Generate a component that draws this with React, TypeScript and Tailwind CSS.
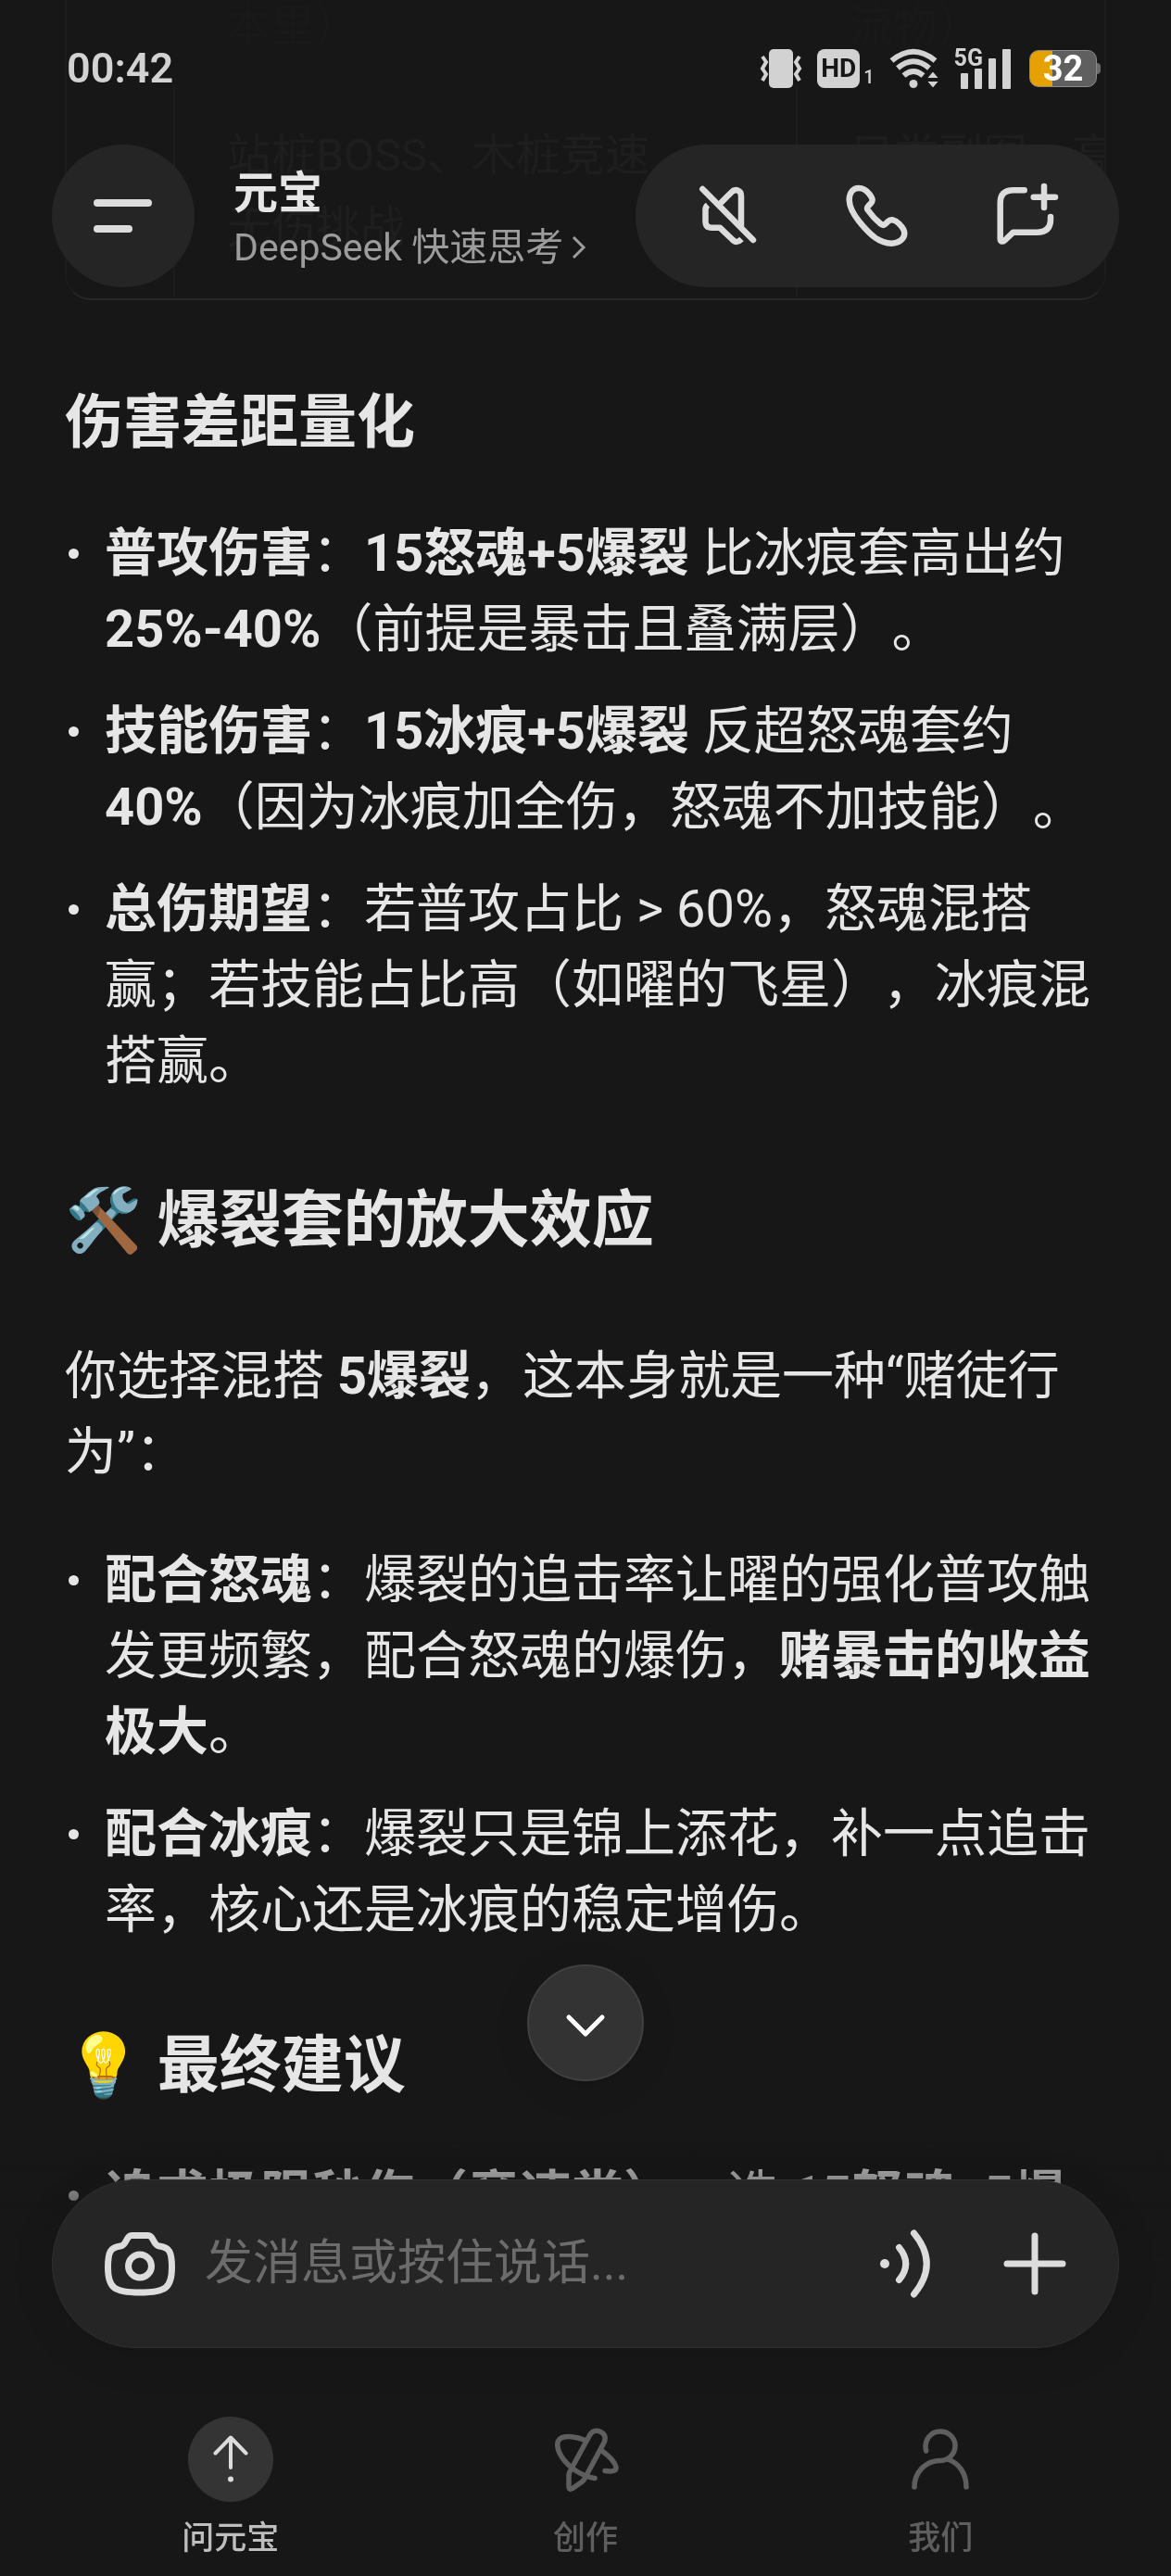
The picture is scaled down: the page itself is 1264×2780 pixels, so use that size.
import type { ReactNode } from "react";

interface IconProps {
  className?: string;
  children: ReactNode;
}

function Icon({ className = "size-20", children }: IconProps) {
  return (
    <svg
      viewBox="0 0 80 80"
      className={`${className} shrink-0`}
      fill="none"
      stroke="currentColor"
      strokeWidth="7"
      strokeLinecap="round"
      strokeLinejoin="round"
      aria-hidden="true"
    >
      {children}
    </svg>
  );
}

function StatusIcons() {
  return (
    <div className="flex items-center gap-4 text-[#d2d2d2]">
      <svg width="46" height="42" viewBox="0 0 46 42" fill="currentColor" aria-hidden="true">
        <rect x="10" width="26" height="42" rx="5" />
        <g fill="none" stroke="currentColor" strokeWidth="4">
          <path d="M3 8 7 14 3 21 7 27 3 34" />
          <path d="M43 8 39 14 43 21 39 27 43 34" />
        </g>
      </svg>
      <div className="flex items-end gap-1">
        <span className="flex h-[42px] w-[46px] items-center justify-center rounded-lg bg-[#d2d2d2] text-[28px] font-bold text-[#171717]">
          HD
        </span>
        <span className="text-[20px] leading-6 font-medium">1</span>
      </div>
      <svg width="54" height="44" viewBox="0 0 54 44" fill="currentColor" aria-hidden="true">
        <circle cx="26" cy="38.500" r="4.500" />
        <g fill="none" stroke="currentColor" strokeWidth="6">
          <path d="M2.500 13.500Q26-6 49.500 13.500" />
          <path d="M9 21.500Q26 7 43 21.500" />
          <path d="M15.500 29.500Q26 20.500 36.500 29.500" />
        </g>
        <path d="M47 25 53.500 32.500H40.500ZM40.500 35.500H53.500L47 43Z" stroke="#171717" strokeWidth="1" />
      </svg>
      <div className="flex items-end">
        <span className="-mr-6 self-start text-[25px] leading-5 font-bold">5G</span>
        <svg width="54" height="43" viewBox="0 0 54 43" fill="currentColor" aria-hidden="true">
          <rect x="0" y="26" width="8" height="17" rx="1" />
          <rect x="15" y="21" width="8" height="22" rx="1" />
          <rect x="30" y="10" width="8" height="33" rx="1" />
          <rect x="45" y="0" width="9" height="43" rx="1" />
        </svg>
      </div>
      <div className="ml-1 flex items-center">
        <span className="flex h-10 w-[73px] items-center justify-center rounded-[10px] border border-[#8a8a8a] bg-linear-to-r from-[#e6a000] from-34% to-[#5f5f5f] to-34% text-[38px] font-bold text-white">
          32
        </span>
        <span className="h-3 w-1 rounded-r bg-[#6a6a6a]" />
      </div>
    </div>
  );
}

function Header() {
  return (
    <header className="fixed inset-x-0 top-0 z-10">
      <div className="flex h-[148px] items-center justify-between pr-[76px] pl-[72px]">
        <time className="text-[45px] font-semibold text-[#d2d2d2]">00:42</time>
        <StatusIcons />
      </div>
      <div className="mt-2 flex items-center px-14">
        <button
          aria-label="菜单"
          className="flex size-[154px] flex-col items-start justify-center gap-5 rounded-full bg-[#252525] pl-[45px]"
        >
          <span className="h-2 w-[63px] rounded-full bg-[#dcdcdc]" />
          <span className="h-2 w-[42px] rounded-full bg-[#dcdcdc]" />
        </button>
        <div className="ml-[42px] flex-1 pt-2">
          <h1 className="text-[48px] leading-[60px] font-bold text-[#e6e6e6]">元宝</h1>
          <a href="#model" className="flex items-center gap-2 text-[41px] leading-[56px] text-[#9c9c9c]">
            DeepSeek 快速思考
            <svg width="18" height="28" viewBox="0 0 18 28" fill="none" stroke="currentColor" strokeWidth="3" aria-hidden="true">
              <path d="M3 3 14 14 3 25" />
            </svg>
          </a>
        </div>
        <div className="flex h-[154px] items-center gap-[90px] rounded-full bg-[#252525] px-[63px] text-[#dcdcdc]">
          <button aria-label="静音">
            <svg width="72" height="72" viewBox="0 0 72 72" fill="none" stroke="currentColor" strokeWidth="6.500" strokeLinejoin="round" aria-hidden="true">
              <path d="M9.300 7 64 62" strokeLinecap="round" />
              <path d="M15 24.300C13 26 12.500 27 12.500 29V42Q12.500 48.700 19 48.700H28L41.500 61.500Q46 66.500 51.500 61" />
              <path d="M28 23 40.500 10.500C45 6 51 8.500 51 14.500V47" />
            </svg>
          </button>
          <button aria-label="通话">
            <svg width="72" height="72" viewBox="0 0 72 72" fill="none" stroke="currentColor" strokeWidth="6.500" strokeLinejoin="round" aria-hidden="true">
              <path d="M16 6C9 6 5.700 12 5.700 19C6 27 10.500 34.500 16 41.500C22 49 27 54.500 33 59C39 63.500 45 65.700 51.500 65.700C59 65.700 65.300 61 65.300 54.700C65.300 50.500 62.500 47.500 59.500 44.500C55 40 50.500 39 47.500 42L45 44.500Q42.500 47 39.500 44.500C34 40 29.500 35 26 30Q24 27.500 26.500 25L29 22.500C32 19 30.500 16.500 27.500 12.500C24 8 20.500 6 16 6Z" />
            </svg>
          </button>
          <button aria-label="新对话">
            <svg width="72" height="72" viewBox="0 0 72 72" fill="none" stroke="currentColor" strokeWidth="6.500" strokeLinecap="round" strokeLinejoin="round" aria-hidden="true">
              <path d="M32.700 8.300H21Q6.700 8.300 6.700 22V60.500C6.700 64 9.500 64.500 12 62L20.700 53.700H46Q61 53.700 61 40V37" />
              <path d="M42.700 15.700H66M54 4V27" />
            </svg>
          </button>
        </div>
      </div>
    </header>
  );
}

function SceneTable() {
  return (
    <div className="h-[324px] overflow-hidden rounded-b-[28px] border-x-2 border-b-2 border-x-[#1c1c1c] border-b-[#272727]">
      <table className="w-[1210px] table-fixed text-left text-[48px] whitespace-nowrap">
        <tbody>
          <tr className="h-[93px] align-top leading-[56px] text-[#191919]">
            <td className="w-[116px]" />
            <td className="w-[672px] pl-14">本里）</td>
            <td className="pl-14">流物）</td>
          </tr>
          <tr className="align-top leading-[78px] text-[#1e1e1e]">
            <td />
            <td className="border-l-2 border-[#1d1d1d] py-9 pl-14">
              站桩BOSS、木桩竞速
              <br />
              无伤挑战
            </td>
            <td className="border-l-2 border-[#1d1d1d] py-9 pl-14">只类副图、高</td>
          </tr>
        </tbody>
      </table>
    </div>
  );
}

function Bullet({ children }: { children: ReactNode }) {
  return (
    <li className="flex">
      <span className="mt-9 mr-7 ml-1 size-[11px] shrink-0 rounded-full bg-current" />
      <div>{children}</div>
    </li>
  );
}

function Answer() {
  return (
    <main className="px-[70px] text-[56px] leading-[82px] text-[#e6e6e6]">
      <SceneTable />
      <h2 className="mt-[88px] text-[63px] leading-[88px] font-bold">伤害差距量化</h2>
      <ul className="mt-14 flex flex-col gap-7">
        <Bullet>
          <strong>普攻伤害</strong>：<strong>15怒魂+5爆裂</strong> 比冰痕套高出约 <strong>25%-40%</strong>（前提是暴击且叠满层）。
        </Bullet>
        <Bullet>
          <strong>技能伤害</strong>：<strong>15冰痕+5爆裂</strong> 反超怒魂套约 <strong>40%</strong>（因为冰痕加全伤，怒魂不加技能）。
        </Bullet>
        <Bullet>
          <strong>总伤期望</strong>：若普攻占比 &gt; 60%，怒魂混搭赢；若技能占比高（如曜的飞星），冰痕混搭赢。
        </Bullet>
      </ul>
      <h2 className="mt-[84px] text-[67px] leading-[94px] font-bold">🛠️ 爆裂套的放大效应</h2>
      <p className="mt-20">
        你选择混搭 <strong>5爆裂</strong>，这本身就是一种“赌徒行为”：
      </p>
      <ul className="mt-14 flex flex-col gap-7">
        <Bullet>
          <strong>配合怒魂</strong>：爆裂的追击率让曜的强化普攻触发更频繁，配合怒魂的爆伤，<strong>赌暴击的收益极大</strong>。
        </Bullet>
        <Bullet>
          <strong>配合冰痕</strong>：爆裂只是锦上添花，补一点追击率，核心还是冰痕的稳定增伤。
        </Bullet>
      </ul>
      <h2 className="mt-20 text-[67px] leading-[94px] font-bold">💡 最终建议</h2>
      <ul className="mt-[52px]">
        <Bullet>
          <strong>追求极限秒伤（竞速党）</strong>：选 <strong>15怒魂+5爆</strong>
        </Bullet>
      </ul>
    </main>
  );
}

function Composer() {
  return (
    <form className="mx-14 flex h-[182px] items-center rounded-full border border-[#303030] bg-[#252525] pr-[50px] pl-[54px] text-[#dcdcdc] shadow-[0_8px_48px_rgba(0,0,0,0.1)]">
      <button type="button" aria-label="拍照">
        <Icon>
          <path d="M31 9.500H49C55 9.500 54 20 61 21C72 22.500 74.500 27 74.500 44C74.500 66 68 71 40 71C12 71 5.500 66 5.500 44C5.500 27 8 22.500 19 21C26 20 25 9.500 31 9.500Z" />
          <circle cx="40" cy="42.500" r="12.500" />
        </Icon>
      </button>
      <input
        type="text"
        aria-label="发消息"
        placeholder="发消息或按住说话..."
        className="ml-[30px] min-w-0 flex-1 bg-transparent text-[52px] leading-[72px] outline-none placeholder:text-[#6c6c6c]"
      />
      <button type="button" aria-label="语音">
        <Icon>
          <circle cx="14" cy="40" r="5" fill="currentColor" stroke="none" />
          <path d="M29.500 22.500Q44 40 29.500 57.500" />
          <path d="M45.500 7Q73 40 45.500 73" />
        </Icon>
      </button>
      <button type="button" aria-label="更多" className="ml-14">
        <Icon>
          <path d="M40 10V70M10 40H70" />
        </Icon>
      </button>
    </form>
  );
}

function TabBar() {
  return (
    <nav className="mt-[74px] grid grid-cols-3 px-[57px] pb-5 text-[35px] leading-10 font-medium text-[#5e5e5e]">
      <a href="#ask" className="flex flex-col items-center gap-5 text-[#bebebe]">
        <span className="flex size-[92px] items-center justify-center rounded-full bg-[#343434] text-[#dcdcdc]">
          <svg width="92" height="92" viewBox="0 0 92 92" fill="none" stroke="currentColor" strokeWidth="4" strokeLinecap="round" strokeLinejoin="round" aria-hidden="true">
            <path d="M46 23V55M29.500 39.500 46 22.500 62.500 39.500" />
            <circle cx="46" cy="67.500" r="3" fill="currentColor" stroke="none" />
          </svg>
        </span>
        问元宝
      </a>
      <a href="#create" className="flex flex-col items-center gap-5">
        <span className="flex h-[92px] items-center">
          <svg width="80" height="80" viewBox="0 0 80 80" fill="none" stroke="currentColor" strokeWidth="5.500" strokeLinecap="round" strokeLinejoin="round" aria-hidden="true">
            <path d="M44 15C46.500 10 51 8 55.500 10C61 12.500 62.500 17 60 22L39 61Q38 63 36 64.500L26 71.500C23.500 73 22 72 22 69.500V58Q22 55.500 23 53.500Z" />
            <path d="M39.500 19.500C30 15 18 14.500 13 17.500C8 21 9 29 14 37C21 48 35 58 50 60.500" />
            <path d="M58 31C66 37 72 44 73 48.500C73.500 53 68 53.500 61 52.500" />
          </svg>
        </span>
        创作
      </a>
      <a href="#us" className="flex flex-col items-center gap-5">
        <span className="flex h-[92px] items-center">
          <svg width="80" height="80" viewBox="0 0 80 80" fill="none" stroke="currentColor" strokeWidth="5.500" strokeLinecap="round" strokeLinejoin="round" aria-hidden="true">
            <path d="M24.700 31C22 20 29 10 40 10C49 10 56 17 56 25.500C56 34 49 41.500 40 41.500C24 41.500 12 54 12 70" />
            <path d="M48 40C60 44 68 55 68 70" />
          </svg>
        </span>
        我们
      </a>
    </nav>
  );
}

export default function App() {
  return (
    <div className="h-screen overflow-hidden bg-[#171717] font-['Roboto','Noto_Sans_CJK_SC',sans-serif] [text-spacing-trim:space-all]">
      <Header />
      <Answer />
      <footer className="fixed inset-x-0 bottom-0 z-10">
        <div className="flex justify-center">
          <button
            aria-label="回到底部"
            className="flex size-[126px] items-center justify-center rounded-full border-2 border-[#404040] bg-[#333333] text-white shadow-[0_8px_40px_rgba(0,0,0,0.1)]"
          >
            <svg width="44" height="28" viewBox="0 0 44 28" fill="none" stroke="currentColor" strokeWidth="5" strokeLinecap="round" strokeLinejoin="round" className="mt-2" aria-hidden="true">
              <path d="M4 4 22 22 40 4" />
            </svg>
          </button>
        </div>
        <div className="mt-[46px] bg-linear-to-b from-transparent to-[#171717] to-30% pt-[60px]">
          <Composer />
          <TabBar />
        </div>
      </footer>
    </div>
  );
}
